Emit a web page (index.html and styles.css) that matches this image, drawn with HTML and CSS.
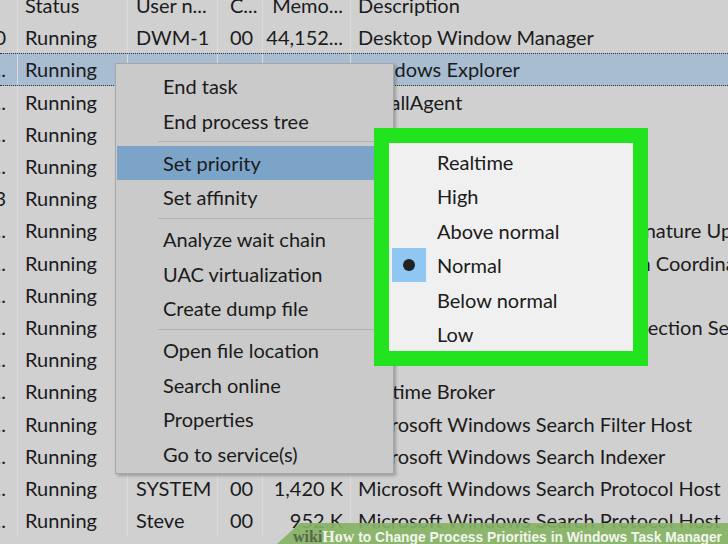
FILE: index.html
```html
<!DOCTYPE html>
<html lang="en">

<head>
  <meta charset="utf-8">
  <title>Task Manager - Set priority</title>
  <link rel="stylesheet" href="styles.css">
</head>

<body>
  <!-- Details list -->
  <div class="tm">
    <div class="row head">
      <div class="c c0"></div>
      <div class="c st">Status</div>
      <div class="c us">User n...</div>
      <div class="c cp">C...</div>
      <div class="c me">Memo...</div>
      <div class="c de">Description</div>
    </div>
    <div class="row">
      <div class="c c0">10</div>
      <div class="c st">Running</div>
      <div class="c us">DWM-1</div>
      <div class="c cp">00</div>
      <div class="c me">44,152...</div>
      <div class="c de">Desktop Window Manager</div>
    </div>
    <div class="row sel">
      <div class="c c0">...</div>
      <div class="c st">Running</div>
      <div class="c us">Steve</div>
      <div class="c cp">00</div>
      <div class="c me">13,572...</div>
      <div class="c de">Windows Explorer</div>
    </div>
    <div class="row">
      <div class="c c0">...</div>
      <div class="c st">Running</div>
      <div class="c us">SYSTEM</div>
      <div class="c cp">00</div>
      <div class="c me">2,104 K</div>
      <div class="c de">InstallAgent</div>
    </div>
    <div class="row">
      <div class="c c0">...</div>
      <div class="c st">Running</div>
      <div class="c us">Steve</div>
      <div class="c cp">00</div>
      <div class="c me">1,880 K</div>
      <div class="c de">Sihost</div>
    </div>
    <div class="row">
      <div class="c c0">...</div>
      <div class="c st">Running</div>
      <div class="c us">SYSTEM</div>
      <div class="c cp">00</div>
      <div class="c me">628 K</div>
      <div class="c de">Console Window Host</div>
    </div>
    <div class="row">
      <div class="c c0">3</div>
      <div class="c st">Running</div>
      <div class="c us">SYSTEM</div>
      <div class="c cp">00</div>
      <div class="c me">1,020 K</div>
      <div class="c de">Windows Logon Application</div>
    </div>
    <div class="row">
      <div class="c c0">...</div>
      <div class="c st">Running</div>
      <div class="c us">SYSTEM</div>
      <div class="c cp">00</div>
      <div class="c me">3,336 K</div>
      <div class="c de">Microsoft Defender Antivirus Signature Update</div>
    </div>
    <div class="row">
      <div class="c c0">...</div>
      <div class="c st">Running</div>
      <div class="c us">NETWORK...</div>
      <div class="c cp">00</div>
      <div class="c me">1,544 K</div>
      <div class="c de">Windows Distributed Transaction Coordinator Service</div>
    </div>
    <div class="row">
      <div class="c c0">...</div>
      <div class="c st">Running</div>
      <div class="c us">SYSTEM</div>
      <div class="c cp">00</div>
      <div class="c me">2,412 K</div>
      <div class="c de">Spooler SubSystem App</div>
    </div>
    <div class="row">
      <div class="c c0">...</div>
      <div class="c st">Running</div>
      <div class="c us">LOCAL SE...</div>
      <div class="c cp">00</div>
      <div class="c me">1,296 K</div>
      <div class="c de">Microsoft Network Realtime Inspection Service</div>
    </div>
    <div class="row">
      <div class="c c0">...</div>
      <div class="c st">Running</div>
      <div class="c us">Steve</div>
      <div class="c cp">00</div>
      <div class="c me">4,880 K</div>
      <div class="c de">Idle</div>
    </div>
    <div class="row">
      <div class="c c0">...</div>
      <div class="c st">Running</div>
      <div class="c us">Steve</div>
      <div class="c cp">00</div>
      <div class="c me">3,020 K</div>
      <div class="c de">Runtime Broker</div>
    </div>
    <div class="row">
      <div class="c c0">...</div>
      <div class="c st">Running</div>
      <div class="c us">SYSTEM</div>
      <div class="c cp">00</div>
      <div class="c me">1,108 K</div>
      <div class="c de">Microsoft Windows Search Filter Host</div>
    </div>
    <div class="row">
      <div class="c c0">...</div>
      <div class="c st">Running</div>
      <div class="c us">SYSTEM</div>
      <div class="c cp">00</div>
      <div class="c me">9,764 K</div>
      <div class="c de">Microsoft Windows Search Indexer</div>
    </div>
    <div class="row">
      <div class="c c0">...</div>
      <div class="c st">Running</div>
      <div class="c us">SYSTEM</div>
      <div class="c cp">00</div>
      <div class="c me">1,420 K</div>
      <div class="c de">Microsoft Windows Search Protocol Host</div>
    </div>
    <div class="row">
      <div class="c c0">...</div>
      <div class="c st">Running</div>
      <div class="c us">Steve</div>
      <div class="c cp">00</div>
      <div class="c me">952 K</div>
      <div class="c de">Microsoft Windows Search Protocol Host</div>
    </div>
  </div>

  <!-- Right click menu -->
  <div class="ctx">
    <div class="mi">End task</div>
    <div class="mi">End process tree</div>
    <div class="sep"></div>
    <div class="mi hl">Set priority</div>
    <div class="mi">Set affinity</div>
    <div class="sep"></div>
    <div class="mi">Analyze wait chain</div>
    <div class="mi">UAC virtualization</div>
    <div class="mi">Create dump file</div>
    <div class="sep"></div>
    <div class="mi">Open file location</div>
    <div class="mi">Search online</div>
    <div class="mi">Properties</div>
    <div class="mi">Go to service(s)</div>
  </div>

  <!-- Priority submenu, outlined in green -->
  <div class="sub">
    <div class="si">Realtime</div>
    <div class="si">High</div>
    <div class="si">Above normal</div>
    <div class="si on">Normal</div>
    <div class="si">Below normal</div>
    <div class="si">Low</div>
  </div>

  <!-- Caption strip -->
  <div class="wh">
    <span class="wiki">wiki</span><span class="how">How</span><span class="ttl"> to Change Process Priorities in Windows Task Manager</span>
  </div>
</body>

</html>
```

FILE: styles.css
```css
/* Task manager, zoomed in */
body {
  margin: 0;
  width: 728px;
  height: 544px;
  overflow: hidden;
  position: relative;
  background-color: #d0d0d0;
  color: #1b1b1b;
  font-family: Lato, "Noto Sans", sans-serif;
  font-size: 20px;
}

.tm {
  margin-top: -11px;
}

.row {
  display: grid;
  grid-template-columns: 17px 110px 90px 45px 88px 1fr;
  height: 32.2px;
  box-sizing: border-box;
  align-items: stretch;
}

.c {
  display: flex;
  align-items: center;
  white-space: nowrap;
  overflow: hidden;
  border-left: 1px solid #dbdbdb;
  padding-left: 7px;
}

.c0 {
  border-left: none;
  padding-left: 0;
  padding-right: 11px;
  justify-content: flex-end;
}

.us {
  padding-left: 8px;
}

.cp {
  padding-left: 12px;
}

.me {
  justify-content: flex-end;
  padding-left: 0;
  padding-right: 7px;
}

.de {
  overflow: visible;
}

.row.sel {
  background-color: #a8bdd1;
  border-top: 1px dotted #333;
  border-bottom: 1px dotted #333;
}

/* Context menu */
.ctx {
  position: absolute;
  left: 115px;
  top: 63px;
  width: 279px;
  box-sizing: border-box;
  padding: 5px 0 2px;
  background-color: #cacaca;
  border: 1px solid #a6a6a6;
  box-shadow: 2px 2px 3px rgba(0, 0, 0, 0.25);
}

.mi {
  height: 34.5px;
  line-height: 34.5px;
  margin-left: 1px;
  padding-left: 46px;
  white-space: nowrap;
}

.mi.hl {
  background-color: #7ca4c9;
}

.sep {
  height: 1px;
  margin: 3px 0 3.5px 42px;
  background-color: #b2b2b2;
}

/* Submenu */
.sub {
  position: absolute;
  left: 374px;
  top: 128px;
  width: 274px;
  height: 238px;
  box-sizing: border-box;
  padding-top: 2px;
  border: 15px solid #21e41f;
  background-color: #f0f0f0;
}

.si {
  position: relative;
  height: 34.4px;
  line-height: 34.4px;
  padding-left: 48px;
}

.si.on:before {
  content: "";
  position: absolute;
  left: 3px;
  top: 0;
  width: 34px;
  height: 34px;
  background-color: #90c6f2;
}

.si.on:after {
  content: "";
  position: absolute;
  left: 14px;
  top: 11px;
  width: 12px;
  height: 12px;
  border-radius: 50%;
  background-color: #222;
}

/* wikiHow caption */
.wh {
  position: absolute;
  left: 277px;
  right: 0;
  bottom: 0;
  height: 21px;
  line-height: 22px;
  padding-left: 16px;
  white-space: nowrap;
  background-color: rgba(134, 178, 100, 0.92);
  clip-path: polygon(23px 0, 100% 0, 100% 100%, 0 100%);
}

.wiki,
.how {
  font-family: "Liberation Serif", serif;
  font-weight: bold;
  font-size: 16px;
}

.wiki {
  color: #56684a;
}

.how {
  color: #eef4e8;
}

.ttl {
  font-family: "Liberation Sans", Arial, sans-serif;
  font-weight: bold;
  font-size: 13.8px;
  color: #f2f6ee;
}
```
